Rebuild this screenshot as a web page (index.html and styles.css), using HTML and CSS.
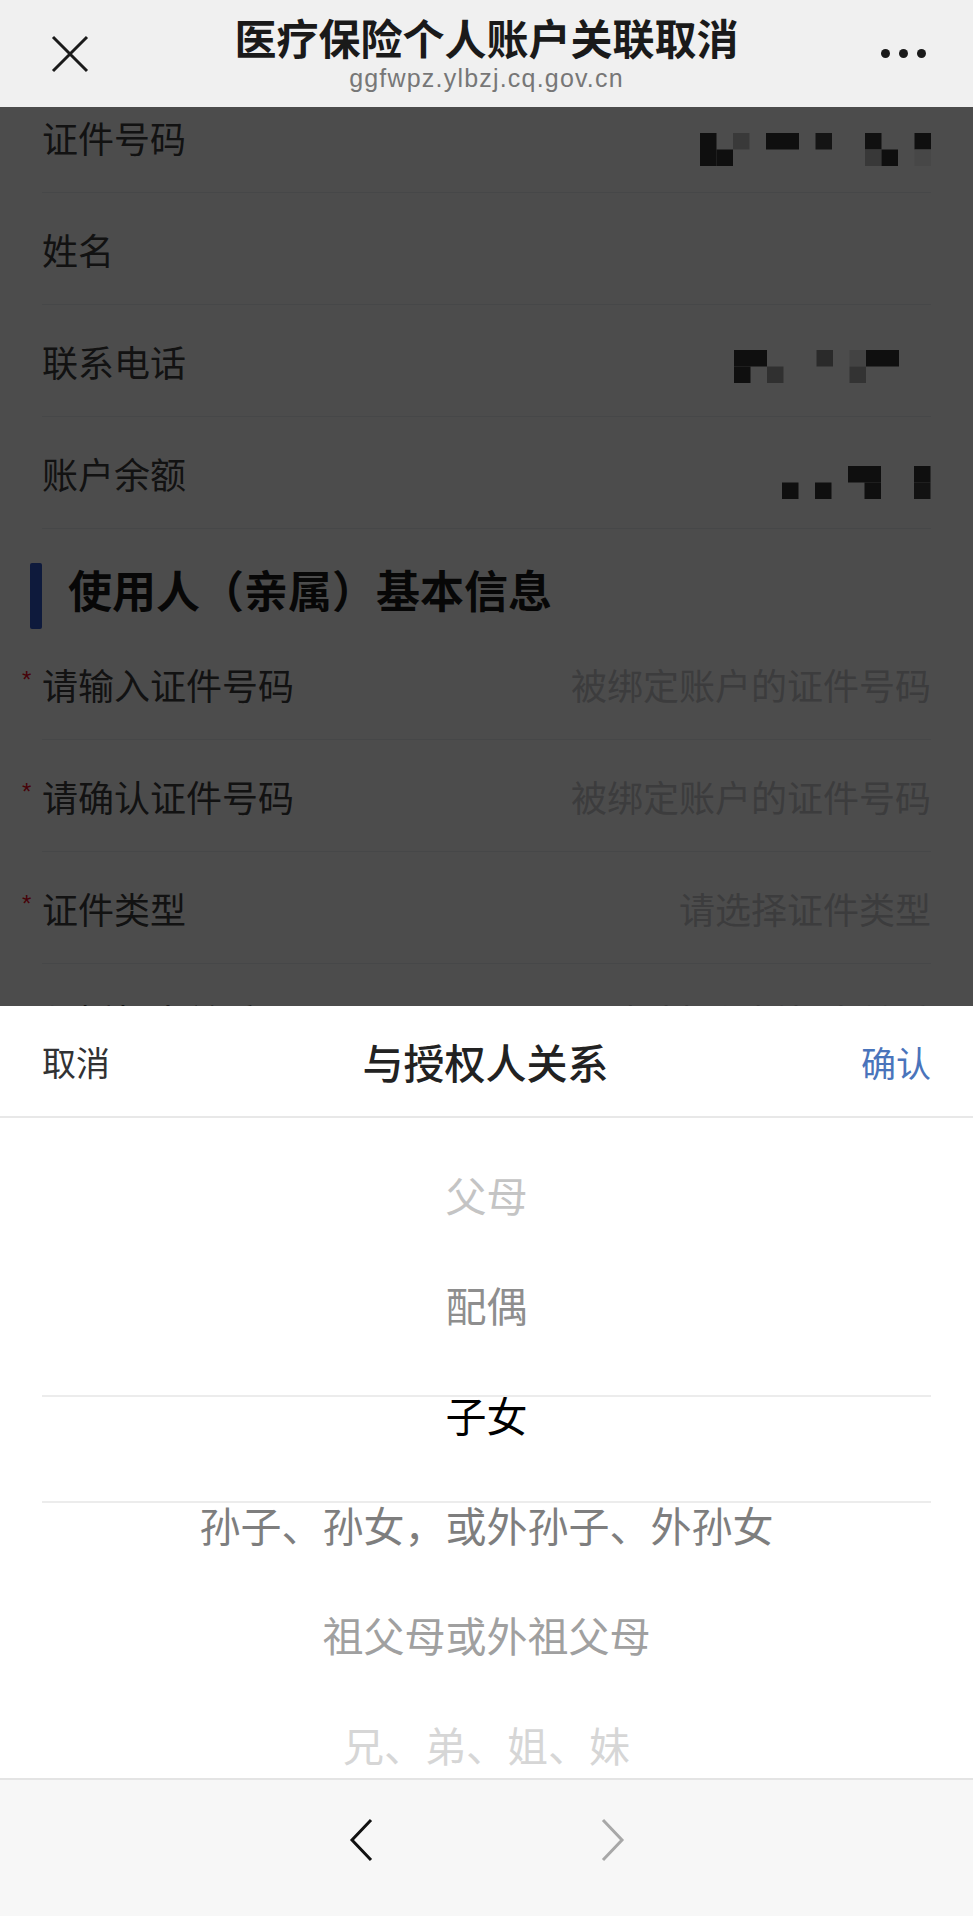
FILE: index.html
```html
<!DOCTYPE html>
<html lang="zh-CN">
<head>
    <meta charset="UTF-8">
    <meta name="viewport" content="width=device-width, initial-scale=1.0">
    <title>医疗保险个人账户关联取消</title>
    <link rel="stylesheet" href="styles.css">
</head>
<body>
    <header class="navbar">
        <div class="nav-side">
            <svg class="icon-close" width="38" height="38" viewBox="0 0 38 38">
                <path d="M2 2 L36 36 M36 2 L2 36" stroke="#1a1a1a" stroke-width="3" fill="none"/>
            </svg>
        </div>
        <div class="nav-title">
            <h1>医疗保险个人账户关联取消</h1>
            <div class="nav-url">ggfwpz.ylbzj.cq.gov.cn</div>
        </div>
        <div class="nav-side">
            <span class="dots"><i></i><i></i><i></i></span>
        </div>
    </header>

    <main class="viewport">
        <div class="form">
            <!-- 授权人信息 (号码已打码) -->
            <div class="cell">
                <span class="label">证件号码</span>
                <svg class="mosaic mosaic-id" width="231" height="33" viewBox="0 0 231 33">
                    <rect x="0" y="0" width="16.5" height="33" fill="#333"/>
                    <rect x="16.5" y="16.5" width="16.5" height="16.5" fill="#333"/>
                    <rect x="33" y="0" width="16.5" height="16.5" fill="#c0c0c0"/>
                    <rect x="66" y="0" width="33" height="16.5" fill="#333"/>
                    <rect x="115.5" y="0" width="16.5" height="16.5" fill="#444"/>
                    <rect x="165" y="0" width="16.5" height="16.5" fill="#383838"/>
                    <rect x="165" y="16.5" width="16.5" height="16.5" fill="#bbb"/>
                    <rect x="181.5" y="16.5" width="16.5" height="16.5" fill="#333"/>
                    <rect x="214.5" y="0" width="16.5" height="16.5" fill="#333"/>
                    <rect x="214.5" y="16.5" width="16.5" height="16.5" fill="#eee"/>
                </svg>
            </div>
            <div class="cell">
                <span class="label">姓名</span>
            </div>
            <div class="cell">
                <span class="label">联系电话</span>
                <svg class="mosaic mosaic-phone" width="181" height="33" viewBox="0 0 181 33">
                    <rect x="0" y="0" width="33" height="16.5" fill="#333"/>
                    <rect x="0" y="16.5" width="16.5" height="16.5" fill="#333"/>
                    <rect x="33" y="16.5" width="16.5" height="16.5" fill="#a0a0a0"/>
                    <rect x="82.5" y="0" width="16.5" height="16.5" fill="#8c8c8c"/>
                    <rect x="115.5" y="0" width="16.5" height="16.5" fill="#e0e0e0"/>
                    <rect x="115.5" y="16.5" width="16.5" height="16.5" fill="#aaa"/>
                    <rect x="132" y="0" width="33" height="16.5" fill="#333"/>
                </svg>
            </div>
            <div class="cell">
                <span class="label">账户余额</span>
                <svg class="mosaic mosaic-money" width="182" height="33" viewBox="0 0 182 33">
                    <rect x="99" y="0" width="33" height="16.5" fill="#333"/>
                    <rect x="165" y="0" width="16.5" height="16.5" fill="#333"/>
                    <rect x="33" y="16.5" width="16.5" height="16.5" fill="#333"/>
                    <rect x="66" y="16.5" width="16.5" height="16.5" fill="#333"/>
                    <rect x="115.5" y="16.5" width="16.5" height="16.5" fill="#333"/>
                    <rect x="165" y="16.5" width="16.5" height="16.5" fill="#3c3c3c"/>
                </svg>
            </div>

            <div class="section-title">
                <span class="bar"></span>
                <h2>使用人（亲属）基本信息</h2>
            </div>

            <div class="cell">
                <span class="label"><span class="req">*</span>请输入证件号码</span>
                <span class="placeholder">被绑定账户的证件号码</span>
            </div>
            <div class="cell">
                <span class="label"><span class="req">*</span>请确认证件号码</span>
                <span class="placeholder">被绑定账户的证件号码</span>
            </div>
            <div class="cell">
                <span class="label"><span class="req">*</span>证件类型</span>
                <span class="placeholder">请选择证件类型</span>
            </div>
            <div class="cell">
                <span class="label"><span class="req">*</span>与授权人关系</span>
                <span class="placeholder">请选择与授权人关系</span>
            </div>
        </div>
        <div class="mask"></div>
    </main>

    <section class="sheet">
        <div class="sheet-toolbar">
            <span class="btn-cancel">取消</span>
            <span class="sheet-title">与授权人关系</span>
            <span class="btn-confirm">确认</span>
        </div>
        <div class="picker">
            <ul class="picker-list">
                <li class="lv3">父母</li>
                <li class="lv1">配偶</li>
                <li class="active">子女</li>
                <li class="lv1b">孙子、孙女，或外孙子、外孙女</li>
                <li class="lv2">祖父母或外祖父母</li>
                <li class="lv4">兄、弟、姐、妹</li>
            </ul>
            <div class="picker-frame"></div>
        </div>
    </section>

    <footer class="toolbar">
        <svg class="nav-arrow" width="26" height="44" viewBox="0 0 26 44">
            <path d="M23 2 L4 22 L23 42" stroke="#111" stroke-width="3" fill="none"/>
        </svg>
        <svg class="nav-arrow" width="26" height="44" viewBox="0 0 26 44">
            <path d="M3 2 L22 22 L3 42" stroke="#a8a8a8" stroke-width="3" fill="none"/>
        </svg>
    </footer>
</body>
</html>
```

FILE: styles.css
```css
* {
    box-sizing: border-box;
}

body {
    margin: 0;
    width: 973px;
    height: 1916px;
    display: flex;
    flex-direction: column;
    overflow: hidden;
    font-family: "Noto Sans CJK SC", "Noto Sans", sans-serif;
    background-color: #fff;
    color: #323233;
}

/* 顶部导航 */
.navbar {
    flex: none;
    height: 107px;
    display: flex;
    align-items: center;
    padding-bottom: 4px;
    background-color: #f0f0f0;
}

.nav-side {
    width: 140px;
    display: flex;
    justify-content: center;
    align-items: center;
    margin-top: 4px;
}

.nav-title {
    flex: 1;
    text-align: center;
}

.nav-title h1 {
    margin: 0;
    font-size: 42px;
    line-height: 50px;
    font-weight: bold;
    color: #1a1a1a;
}

.nav-url {
    margin-top: 2px;
    font-family: "Liberation Sans", Arial, sans-serif;
    font-size: 25px;
    line-height: 28px;
    letter-spacing: 1.2px;
    color: #777;
}

.dots {
    display: flex;
    gap: 9px;
}

.dots i {
    width: 9px;
    height: 9px;
    border-radius: 50%;
    background-color: #1a1a1a;
}

/* 表单区域 */
.viewport {
    flex: none;
    position: relative;
    height: 899px;
    overflow: hidden;
}

.form {
    margin-top: -26px;
}

.cell {
    display: flex;
    justify-content: space-between;
    align-items: center;
    height: 112px;
    margin: 0 42px;
    border-bottom: 1px solid #ebedf0;
    font-size: 36px;
}

.label {
    color: #3c3c3d;
}

.req {
    display: inline-block;
    width: 20px;
    margin-left: -20px;
    font-family: "Liberation Sans", Arial, sans-serif;
    font-size: 24px;
    color: #ee0a24;
    vertical-align: 12px;
}

.placeholder {
    color: #c8c9cc;
}

.mosaic {
    display: block;
}

.mosaic-id {
    margin-top: 26px;
}

.mosaic-phone {
    margin-top: 12px;
    margin-right: 16px;
}

.mosaic-money {
    margin-top: 20px;
}

.section-title {
    display: flex;
    align-items: flex-start;
    gap: 26px;
    height: 99px;
    padding: 32px 0 0 30px;
}

.section-title .bar {
    width: 12px;
    height: 66px;
    margin-top: 2px;
    border-radius: 2px;
    background-color: #3158c9;
}

.section-title h2 {
    margin: 0;
    font-size: 44px;
    line-height: 56px;
    font-weight: bold;
    color: #1a1a1a;
}

.mask {
    position: absolute;
    top: 0;
    left: 0;
    right: 0;
    bottom: 0;
    background-color: rgba(0, 0, 0, 0.7);
}

/* 弹出选择器 */
.sheet {
    flex: none;
    height: 772px;
    display: flex;
    flex-direction: column;
    background-color: #fff;
}

.sheet-toolbar {
    flex: none;
    height: 112px;
    display: flex;
    justify-content: space-between;
    align-items: center;
    padding: 0 42px;
    border-bottom: 2px solid #e8e8e8;
}

.btn-cancel {
    font-size: 34px;
    color: #323233;
}

.sheet-title {
    font-size: 41px;
    font-weight: 500;
    color: #222;
}

.btn-confirm {
    font-size: 35px;
    color: #4a74bb;
}

.picker {
    flex: 1;
    position: relative;
    overflow: hidden;
}

.picker-list {
    list-style-type: none;
    margin: 0;
    padding: 21px 0 0;
}

.picker-list li {
    height: 110px;
    line-height: 110px;
    text-align: center;
    font-size: 41px;
}

.picker-list .active {
    color: #000;
}

.picker-list .lv1 {
    color: #8e8e8e;
}

.picker-list .lv1b {
    color: #7e7e7e;
}

.picker-list .lv2 {
    color: #a0a0a0;
}

.picker-list .lv3 {
    color: #c4c4c4;
}

.picker-list .lv4 {
    color: #d6d6d6;
}

.picker-frame {
    position: absolute;
    top: 277px;
    left: 42px;
    right: 42px;
    height: 108px;
    border-top: 2px solid #ececec;
    border-bottom: 2px solid #ececec;
}

/* 底部浏览器工具栏 */
.toolbar {
    flex: none;
    height: 138px;
    display: flex;
    justify-content: center;
    align-items: flex-start;
    gap: 226px;
    padding-top: 38px;
    background-color: #f7f7f7;
    border-top: 2px solid #e4e4e4;
}
```
